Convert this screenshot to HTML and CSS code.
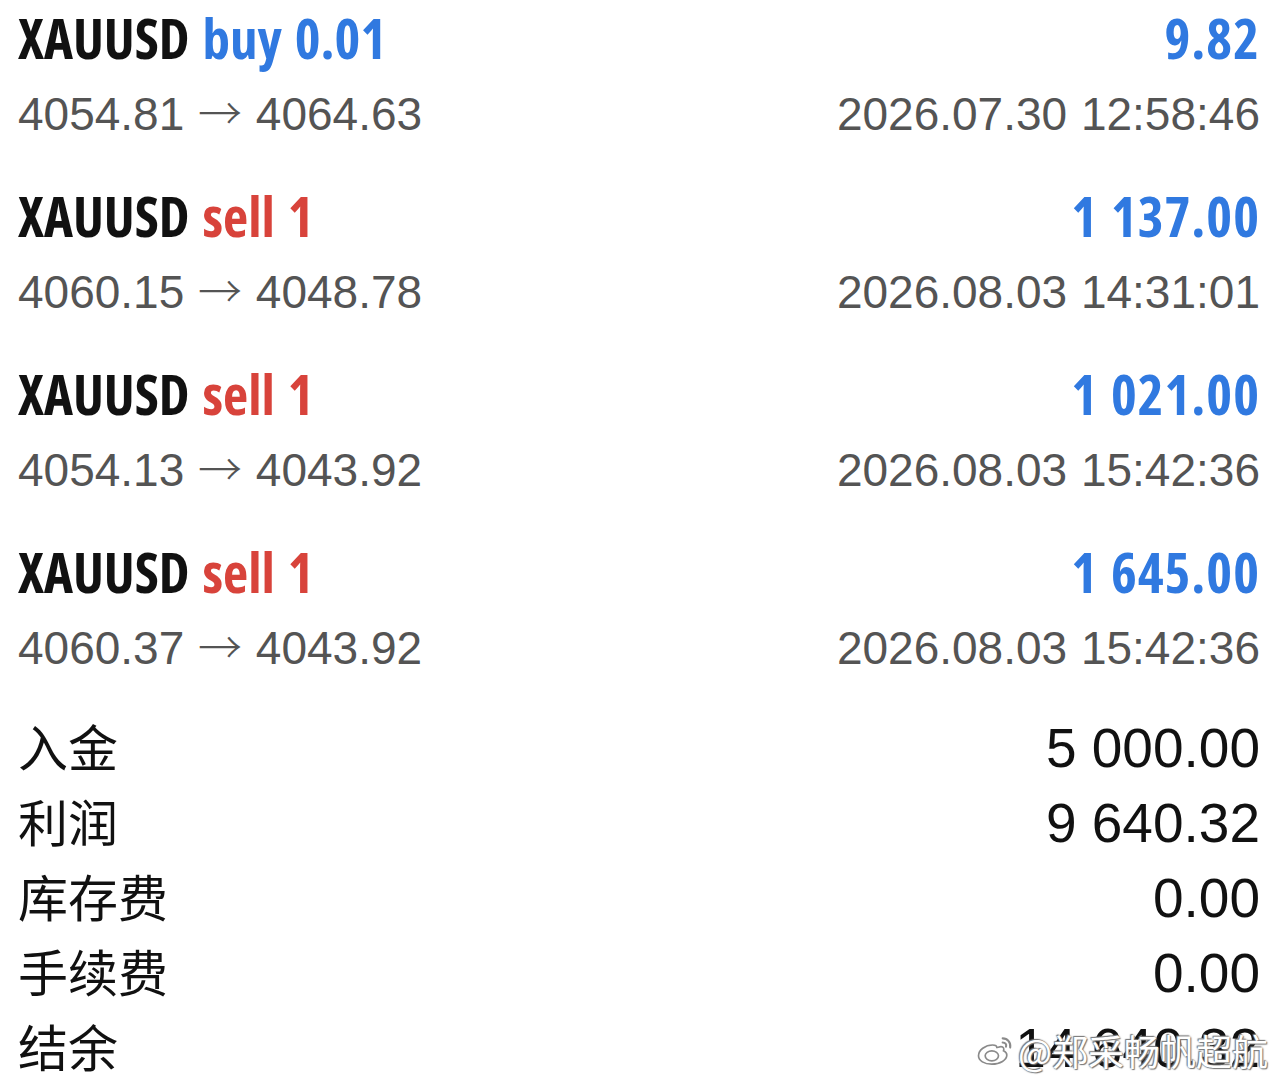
FILE: index.html
```html
<!DOCTYPE html>
<html lang="zh-CN">
<head>
    <meta charset="UTF-8">
    <meta name="viewport" content="width=device-width, initial-scale=1.0">
    <title>历史 - XAUUSD</title>
    <link rel="stylesheet" href="styles.css">
</head>
<body>
    <div class="history">
        <div class="deal">
            <div class="deal-top">
                <span class="symbol">XAUUSD <span class="buy">buy 0.01</span></span>
                <span class="profit">9.82</span>
            </div>
            <div class="deal-bottom">
                <span>4054.81 <span class="arrow">→</span> 4064.63</span>
                <span>2026.07.30 12:58:46</span>
            </div>
        </div>

        <div class="deal">
            <div class="deal-top">
                <span class="symbol">XAUUSD <span class="sell">sell 1</span></span>
                <span class="profit">1 137.00</span>
            </div>
            <div class="deal-bottom">
                <span>4060.15 <span class="arrow">→</span> 4048.78</span>
                <span>2026.08.03 14:31:01</span>
            </div>
        </div>

        <div class="deal">
            <div class="deal-top">
                <span class="symbol">XAUUSD <span class="sell">sell 1</span></span>
                <span class="profit">1 021.00</span>
            </div>
            <div class="deal-bottom">
                <span>4054.13 <span class="arrow">→</span> 4043.92</span>
                <span>2026.08.03 15:42:36</span>
            </div>
        </div>

        <div class="deal">
            <div class="deal-top">
                <span class="symbol">XAUUSD <span class="sell">sell 1</span></span>
                <span class="profit">1 645.00</span>
            </div>
            <div class="deal-bottom">
                <span>4060.37 <span class="arrow">→</span> 4043.92</span>
                <span>2026.08.03 15:42:36</span>
            </div>
        </div>
    </div>

    <div class="summary">
        <div class="summary-row"><span class="label">入金</span><span>5 000.00</span></div>
        <div class="summary-row"><span class="label">利润</span><span>9 640.32</span></div>
        <div class="summary-row"><span class="label">库存费</span><span>0.00</span></div>
        <div class="summary-row"><span class="label">手续费</span><span>0.00</span></div>
        <div class="summary-row"><span class="label">结余</span><span>14 640.32</span></div>
    </div>

    <div class="watermark">
        <svg class="weibo" viewBox="0 0 48 40" width="40" height="34">
            <path d="M20 14c-9 0-17 6-17 13 0 6 7 10 16 10 10 0 18-5 18-11 0-3-2-4-4-5 1-3 0-5-3-5-2 0-4 1-5 1 0-2-1-3-5-3z" fill="#fff" stroke="#8a8a8a" stroke-width="2"/>
            <ellipse cx="19" cy="27" rx="8" ry="6" fill="none" stroke="#8a8a8a" stroke-width="2"/>
            <path d="M32 6c6 0 10 5 9 11M32 11c3 0 5 2 4 5" fill="none" stroke="#8a8a8a" stroke-width="2.5" stroke-linecap="round"/>
        </svg>
        <span>@郑采畅帆超航</span>
    </div>
</body>
</html>
```

FILE: styles.css
```css
html, body {
    margin: 0;
    padding: 0;
    background: #fff;
}

body {
    width: 1280px;
    height: 1084px;
    overflow: hidden;
    position: relative;
    font-family: 'Liberation Sans', Arial, sans-serif;
}

.history {
    padding: 0 20px 0 18px;
}

.deal {
    margin-bottom: 26px;
}

.deal-top,
.deal-bottom {
    display: flex;
    justify-content: space-between;
    align-items: baseline;
    height: 76px;
    line-height: 76px;
}

.deal-top {
    font-family: 'Open Sans', sans-serif;
    font-stretch: 75%;
    font-weight: 700;
    font-size: 55px;
}

.symbol {
    color: #111;
    word-spacing: 3px;
}

.buy,
.profit {
    color: #3079e0;
}

.profit {
    letter-spacing: 1px;
    word-spacing: 2px;
}

.sell {
    color: #d8433b;
}

.deal-bottom {
    font-size: 46px;
    color: #545454;
    word-spacing: 1px;
}

.arrow {
    font-family: 'Noto Sans CJK SC', sans-serif;
    font-weight: 300;
    font-size: 44px;
    line-height: 0;
}

.summary {
    margin-top: -4px;
    padding: 0 20px 0 18px;
}

.summary-row {
    display: flex;
    justify-content: space-between;
    align-items: baseline;
    height: 75px;
    line-height: 75px;
    font-size: 55px;
    color: #111;
}

.label {
    font-family: 'Noto Sans CJK SC', sans-serif;
    font-size: 50px;
}

.watermark {
    position: absolute;
    right: 12px;
    bottom: 8px;
    display: flex;
    align-items: center;
    gap: 2px;
    font-family: 'Noto Sans CJK SC', sans-serif;
    font-size: 36px;
    color: #fff;
    text-shadow: 0 0 2px #777, 1px 1px 1px #777, -1px -1px 1px #777;
}
```
